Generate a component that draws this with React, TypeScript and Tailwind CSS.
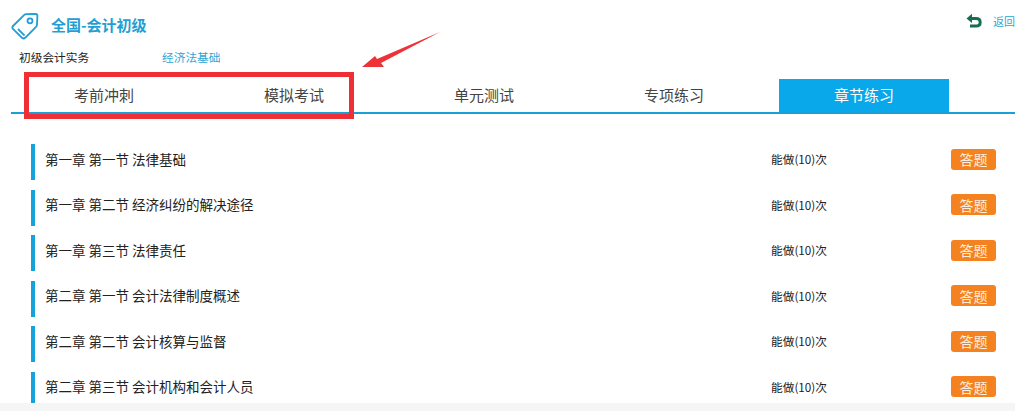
const font = { fontFamily: '"Noto Sans CJK SC", "Liberation Sans", sans-serif' };

const tabs = ['考前冲刺', '模拟考试', '单元测试', '专项练习', '章节练习'];

const rows = [
  '第一章 第一节 法律基础',
  '第一章 第二节 经济纠纷的解决途径',
  '第一章 第三节 法律责任',
  '第二章 第一节 会计法律制度概述',
  '第二章 第二节 会计核算与监督',
  '第二章 第三节 会计机构和会计人员',
];

function TagIcon() {
  return (
    <svg width="28" height="28" viewBox="0 0 28 28" fill="none" stroke="#1f9fd4" strokeWidth="1.8" strokeLinejoin="round">
      <path d="M2 14 L13 3.2 Q14 2.2 15.4 2.2 L24.6 2 Q26.4 2 26.4 3.8 L26 12.4 Q26 13.8 25 14.8 L14.2 25.8 Q12.6 27.2 11 25.8 L2 16.8 Q0.6 15.4 2 14 Z" />
      <circle cx="19" cy="8.8" r="2.5" />
      <path d="M7 17 L13.6 23.6" />
    </svg>
  );
}

function BackIcon() {
  return (
    <svg width="16" height="16" viewBox="0 0 16 16" fill="none">
      <path d="M0.5 5.5 L6 0.8 L6 10 Z" fill="#12704f" />
      <path d="M5 5.4 H10 Q14.2 5.4 14.2 9.2 Q14.2 13 10 13 H4" stroke="#12704f" strokeWidth="3" />
    </svg>
  );
}

export default function App() {
  return (
    <div className="relative w-[1015px] h-[411px] overflow-hidden bg-white" style={font}>
      {/* Header */}
      <div className="flex items-start justify-between h-[79px]">
        <div>
          <div className="flex items-center h-[28px] mt-[12px] ml-[11px] gap-[12px]">
            <TagIcon />
            <span className="text-[15px] font-bold text-[#1f9fd4] leading-none -mt-[4px]">全国-会计初级</span>
          </div>
          <div className="flex mt-[10px] ml-[19px] text-[11.7px] leading-[14px]">
            <span className="w-[143px] text-[#222222]">初级会计实务</span>
            <span className="text-[#2ea7d6]">经济法基础</span>
          </div>
        </div>
        <div className="flex items-center mt-[13px] gap-[11px]">
          <BackIcon />
          <span className="w-[22px] text-[11px] leading-[14px] text-[#2ea7d6] whitespace-nowrap">返回</span>
        </div>
      </div>

      {/* Tabs */}
      <div className="flex gap-[20px] h-[35px] ml-[11px] pl-[8px] border-b-2 border-[#1a9fd6]">
        {tabs.map((tab, i) => (
          <div
            key={tab}
            className={`w-[170px] h-[33px] flex items-center justify-center text-[15px] ${
              i === 4 ? 'bg-[#08a8ea] text-white' : 'text-[#444444]'
            }`}
          >
            {tab}
          </div>
        ))}
      </div>

      {/* Chapter list */}
      <div className="h-[289px] overflow-hidden pt-[30px] pl-[31px] pr-[19px]">
        {rows.map((row) => (
          <div key={row} className="flex items-center h-[36px] mb-[9.5px] pb-[6px] border-l-4 border-[#16a3dc]">
            <span className="w-[736px] pl-[10px] text-[13.5px] text-[#222222] whitespace-nowrap">{row}</span>
            <span className="w-[180px] text-[11.7px] text-[#222222]">能做(10)次</span>
            <button className="w-[45px] h-[21px] rounded-[3px] bg-[#f58220] text-[14px] leading-none text-[#fdeedd]">
              答题
            </button>
          </div>
        ))}
      </div>
      <div className="h-[8px] bg-[#f5f5f5]" />

      {/* Screenshot annotation */}
      <div className="absolute left-[24px] top-[72px] w-[330px] h-[47px] border-[5px] border-[#ee2f36]" />
      <svg className="absolute left-[360px] top-[30px]" width="82" height="40" viewBox="0 0 82 40">
        <path d="M2 37 L15 26 L17 29 L80 2 L21 33 L24 37 Z" fill="#ee3338" />
      </svg>
    </div>
  );
}
